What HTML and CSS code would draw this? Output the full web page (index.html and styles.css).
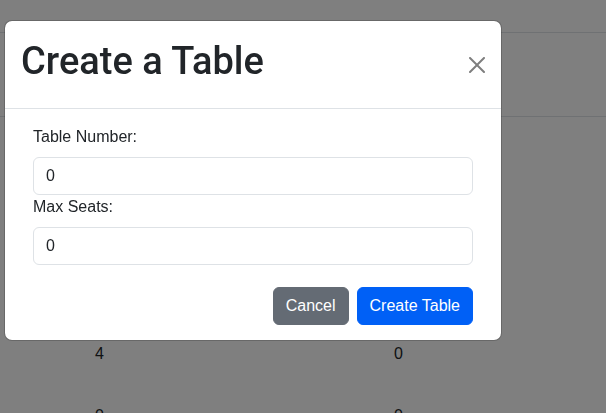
FILE: index.html
```html
<!DOCTYPE html>
<html lang="en">
<head>
<meta charset="utf-8">
<title>Create a Table</title>
<link rel="stylesheet" href="styles.css">
</head>
<body>
  <main class="page">
    <div class="list">
      <div class="list-head">
        <span>Table Number</span>
        <span>Max Seats</span>
      </div>
      <div class="list-body">
        <div class="list-row"><span>1</span><span>0</span></div>
        <div class="list-row"><span>2</span><span>0</span></div>
        <div class="list-row"><span>3</span><span>0</span></div>
        <div class="list-row"><span>4</span><span>0</span></div>
        <div class="list-row"><span>0</span><span>0</span></div>
      </div>
    </div>
  </main>

  <div class="backdrop"></div>

  <div class="modal" role="dialog" aria-labelledby="modal-title">
    <div class="modal-header">
      <h1 class="modal-title" id="modal-title">Create a Table</h1>
      <button class="btn-close" type="button" aria-label="Close">
        <svg viewBox="0 0 16 16" width="16" height="16" aria-hidden="true">
          <path d="M.293.293a1 1 0 0 1 1.414 0L8 6.586 14.293.293a1 1 0 1 1 1.414 1.414L9.414 8l6.293 6.293a1 1 0 0 1-1.414 1.414L8 9.414l-6.293 6.293a1 1 0 0 1-1.414-1.414L6.586 8 .293 1.707a1 1 0 0 1 0-1.414z"/>
        </svg>
      </button>
    </div>
    <form class="modal-body">
      <div class="form-inner">
        <label class="form-label" for="table-number">Table Number:</label>
        <input class="form-control" id="table-number" type="number" value="0">
        <label class="form-label" for="max-seats">Max Seats:</label>
        <input class="form-control" id="max-seats" type="number" value="0">
        <div class="actions">
          <button class="btn btn-secondary" type="button">Cancel</button>
          <button class="btn btn-primary" type="submit">Create Table</button>
        </div>
      </div>
    </form>
  </div>
</body>
</html>
```

FILE: styles.css
```css
* { box-sizing: border-box; }

html, body {
  margin: 0;
  padding: 0;
  background: #ffffff;
  font-family: "Liberation Sans", Arial, Helvetica, sans-serif;
  font-size: 16px;
  line-height: 24px;
  color: #212529;
}

.page {
  padding-top: 32px;
}

.list-head {
  height: 85px;
  border-top: 1px solid #dee2e6;
  border-bottom: 1px solid #dee2e6;
  display: grid;
  grid-template-columns: 299px 1fr;
  align-items: center;
  padding-left: 95px;
  font-weight: bold;
}

.list-body {
  padding-top: 20px;
}

.list-row {
  height: 62px;
  display: grid;
  grid-template-columns: 299px 1fr;
  align-items: center;
  padding-left: 95px;
}

.backdrop {
  position: fixed;
  inset: 0;
  background: rgba(0, 0, 0, 0.5);
}

.modal {
  position: fixed;
  top: 20px;
  left: 4px;
  width: 498px;
  background: #ffffff;
  background-clip: padding-box;
  border: 1px solid rgba(0, 0, 0, 0.175);
  border-radius: 8px;
  display: flex;
  flex-direction: column;
}

.modal-header {
  display: flex;
  align-items: center;
  padding: 16px;
  border-bottom: 1px solid #dee2e6;
}

.modal-title {
  margin: 1px 0 7px 0;
  font-family: Roboto, "Liberation Sans", Arial, sans-serif;
  font-size: 38px;
  line-height: 47px;
  font-weight: 500;
  color: #212529;
}

.btn-close {
  margin: -8px -8px -8px auto;
  padding: 8px;
  width: 32px;
  height: 32px;
  border: 0;
  background: transparent;
  display: flex;
  align-items: center;
  justify-content: center;
  opacity: 0.5;
}

.btn-close svg { display: block; fill: #000; }

.modal-body {
  margin: 0;
  padding: 16px 16px 15px 16px;
}

.form-inner {
  padding: 0 12px;
  display: flex;
  flex-direction: column;
}

.form-label {
  display: block;
  margin-bottom: 8px;
  font-size: 16px;
  line-height: 24px;
}

.form-control {
  display: block;
  width: 100%;
  height: 38px;
  padding: 6px 12px;
  font-family: inherit;
  font-size: 16px;
  line-height: 24px;
  color: #212529;
  background: #ffffff;
  border: 1px solid #dee2e6;
  border-radius: 6px;
  outline: none;
  -moz-appearance: textfield;
}

.form-control::-webkit-outer-spin-button,
.form-control::-webkit-inner-spin-button {
  -webkit-appearance: none;
  margin: 0;
}

.actions {
  display: flex;
  justify-content: flex-end;
  gap: 8px;
  margin-top: 22px;
}

.btn {
  font-family: inherit;
  font-size: 16px;
  line-height: 24px;
  padding: 6px 12px;
  border: 1px solid transparent;
  border-radius: 6px;
  color: #ffffff;
  cursor: pointer;
}

.btn-secondary { background: #646b74; border-color: #646b74; }
.btn-primary { background: #0060f6; border-color: #0060f6; }
```
